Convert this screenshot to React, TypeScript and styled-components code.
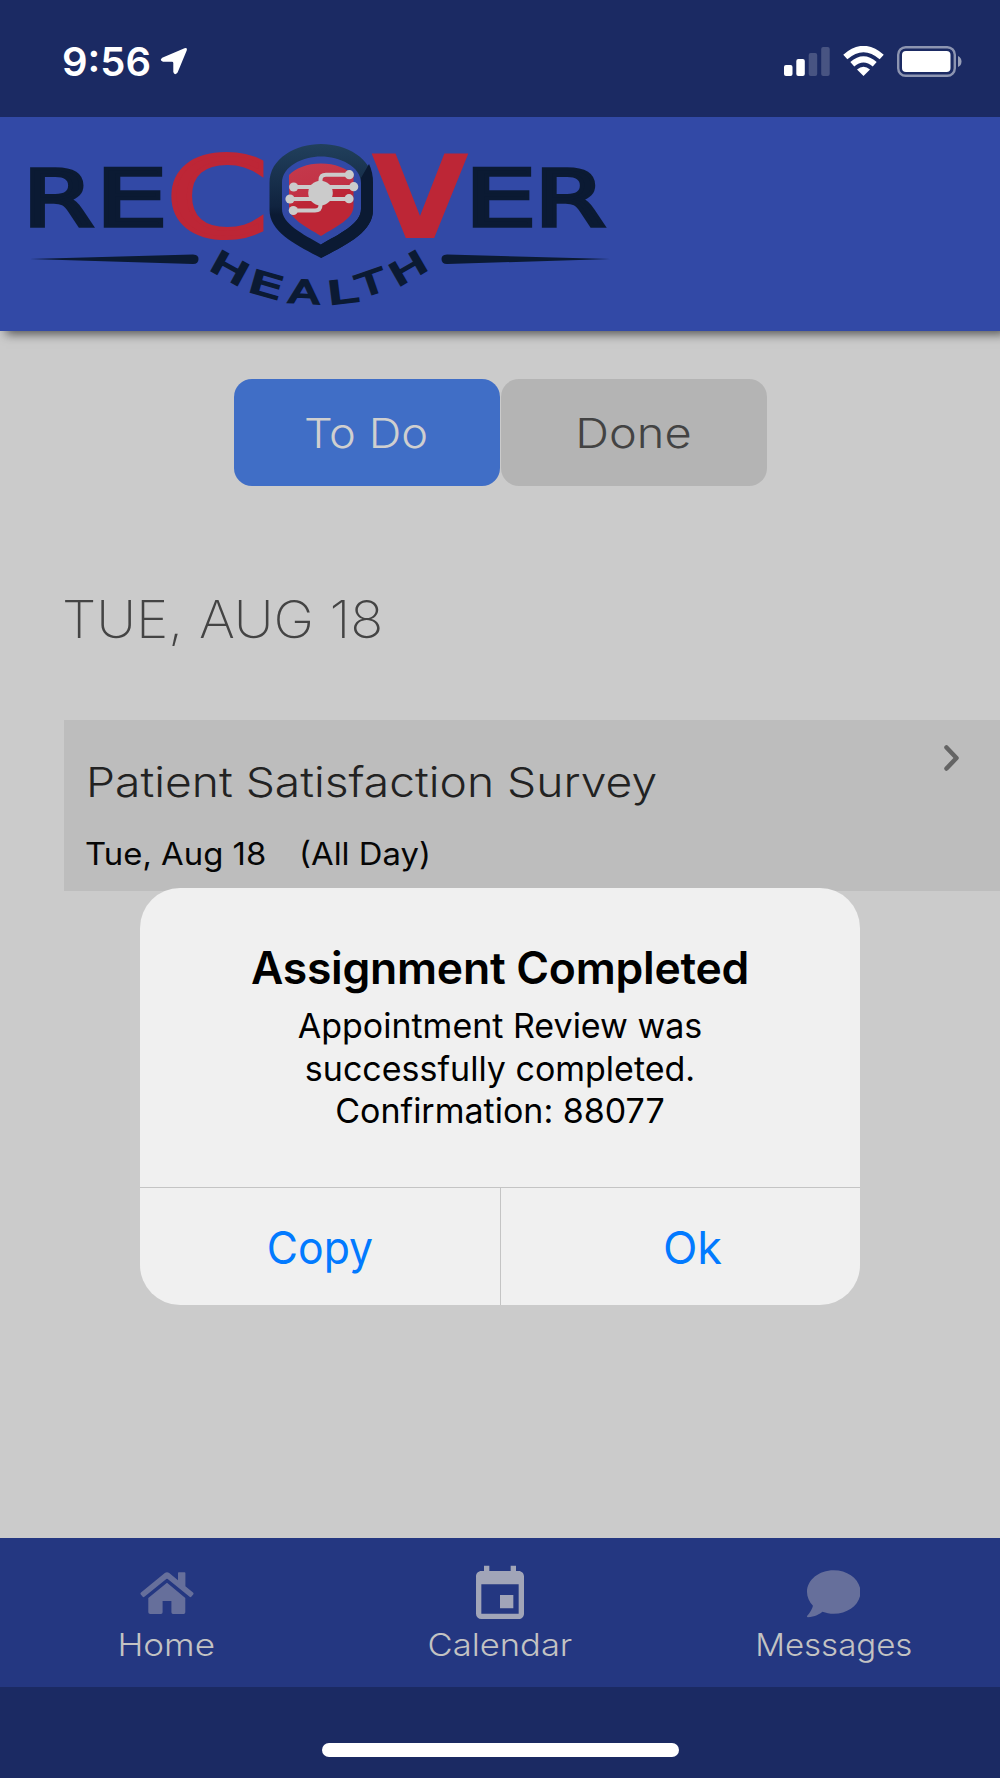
import styled, { createGlobalStyle } from "styled-components";
import { FaComment } from "react-icons/fa";
import { MdEvent } from "react-icons/md";

const GlobalStyle = createGlobalStyle`
    * {
        box-sizing: border-box;
    }
    body {
        margin: 0;
        background: #cbcbcb;
    }
    h1, h2, h3, p {
        margin: 0;
    }
    button {
        border: 0;
        padding: 0;
        background: none;
        font: inherit;
    }
`

const Screen = styled.div`
    position: relative;
    width: 1000px;
    height: 1778px;
    overflow: hidden;
    display: flex;
    flex-direction: column;
    background: #cbcbcb;
    font-family: "Inter", "Liberation Sans", sans-serif;
`

// widens the type face a little
const Wide = styled.span<{ $scale: number; $origin?: string }>`
    display: inline-block;
    transform: scaleX(${({ $scale }) => $scale});
    transform-origin: ${({ $origin }) => $origin || "center"};
`

const StatusBar = styled.div`
    position: relative;
    z-index: 1;
    height: 117px;
    flex: none;
    display: flex;
    justify-content: space-between;
    padding: 38px 37px 0 62px;
    background: #1b2a63;
    color: #fff;
`

const Clock = styled.div`
    display: flex;
    gap: 9px;
    font-size: 40px;
    font-weight: 600;
    line-height: 48px;
    svg {
        margin-top: 9px;
    }
`

const StatusIcons = styled.div`
    display: flex;
    gap: 13px;
    padding-top: 8px;
`

const Header = styled.header`
    position: relative;
    height: 214px;
    flex: none;
    background: #3249a6;
    box-shadow: 6px 3px 10px rgba(0, 0, 0, 0.6);
`

const Content = styled.main`
    flex: 1;
    display: flex;
    flex-direction: column;
`

const Tabs = styled.div`
    display: flex;
    justify-content: center;
    gap: 1px;
    margin: 48px 0 0 0;
`

const Tab = styled.button<{ $active?: boolean }>`
    width: 266px;
    height: 107px;
    border-radius: 18px;
    background: ${({ $active }) => ($active ? "#406ec6" : "#b4b4b4")};
    color: ${({ $active }) => ($active ? "#cfcfcf" : "#434343")};
    font-size: 41.5px;
    font-weight: 300;
    padding: 0 1px 0 0;
`

const DateHeading = styled.h2`
    margin: 100px 0 0 62px;
    height: 134px;
    font-size: 51.5px;
    line-height: 66px;
    font-weight: 250;
    color: #444;
`

const Card = styled.div`
    height: 171px;
    margin-left: 64px;
    padding: 37px 40px 0 22px;
    display: flex;
    justify-content: space-between;
    background: #bdbdbd;
    svg {
        margin-top: -13px;
    }
`

const CardTitle = styled.h3`
    font-size: 41.5px;
    line-height: 50px;
    font-weight: 300;
    color: #222;
`

const CardTime = styled.p`
    display: flex;
    gap: 43px;
    margin: 28px 0 0 -1px;
    font-size: 31px;
    line-height: 38px;
    font-weight: 400;
    color: #060606;
`

const NavBar = styled.nav`
    height: 149px;
    flex: none;
    display: flex;
    background: #243781;
`

const NavItem = styled.div<{ $active?: boolean }>`
    flex: 1;
    display: flex;
    flex-direction: column;
    align-items: center;
    padding-top: 22px;
    font-size: 31px;
    font-weight: 300;
    line-height: 36px;
    color: #c3c3c3;
    svg {
        color: ${({ $active }) => ($active ? "#a1a5b8" : "#666f9b")};
        margin-top: ${({ $active }) => ($active ? "2px" : "0")};
    }
`

const NavIcon = styled.div`
    height: 67px;
    display: flex;
    align-items: center;
`

const HomeArea = styled.div`
    height: 91px;
    flex: none;
    display: flex;
    justify-content: center;
    padding-top: 56px;
    background: #1b2a63;
`

const HomeIndicator = styled.div`
    width: 357px;
    height: 14px;
    border-radius: 7px;
    background: #fff;
`

const Alert = styled.div`
    position: absolute;
    top: 888px;
    left: 140px;
    width: 720px;
    height: 417px;
    border-radius: 40px;
    overflow: hidden;
    display: flex;
    flex-direction: column;
    background: #f0f0f0;
    text-align: center;
    color: #000;
`

const AlertBody = styled.div`
    flex: 1;
    padding-top: 53px;
`

const AlertTitle = styled.h1`
    font-size: 44.5px;
    line-height: 54px;
    font-weight: 600;
    letter-spacing: -0.25px;
`

const AlertMessage = styled.p`
    margin-top: 10px;
    font-size: 34px;
    line-height: 42.7px;
    white-space: pre-line;
`

const AlertActions = styled.div`
    display: grid;
    grid-template-columns: 1fr 1fr;
    height: 118px;
    border-top: 1px solid #c4c4c4;
`

const AlertButton = styled.button<{ $inset?: number }>`
    color: #027aff;
    font-size: 45px;
    padding: 2px 0 0 ${({ $inset }) => $inset || 0}px;
    & + & {
        border-left: 1px solid #c4c4c4;
    }
`

const NAVY = "#0b1a33";
const RED = "#bd2636";

// x is the left edge, y the baseline
const wordmark = [
    { char: "R", x: 22.3, y: 226, width: 72, size: 79, weight: 400, stroke: 3.5, fill: NAVY },
    { char: "E", x: 95, y: 226, width: 73, size: 79, weight: 400, stroke: 3.5, fill: NAVY },
    { char: "C", x: 165.7, y: 236, width: 103, size: 111, weight: 400, stroke: 4, fill: RED },
    { char: "V", x: 371, y: 237.5, width: 98, size: 115, weight: 700, stroke: 0, fill: RED },
    { char: "E", x: 464, y: 226, width: 73, size: 79, weight: 400, stroke: 3.5, fill: NAVY },
    { char: "R", x: 534, y: 226, width: 72, size: 79, weight: 400, stroke: 3.5, fill: NAVY },
];

// letters of the curved line, x and y are their centres
const curved = [
    { char: "H", x: 230, y: 268, width: 38, angle: 29 },
    { char: "E", x: 266, y: 284.5, width: 34, angle: 16 },
    { char: "A", x: 304, y: 291.5, width: 31, angle: 3 },
    { char: "L", x: 342, y: 291.5, width: 30, angle: -7 },
    { char: "T", x: 371, y: 282.5, width: 28, angle: -19 },
    { char: "H", x: 408, y: 268, width: 38, angle: -30 },
];

const Logo = () => (
    <svg width="620" height="214" viewBox="0 117 620 214" fontFamily="DejaVu Sans, sans-serif">
        <defs>
            <linearGradient id="shield" x1="0" y1="0" x2="0" y2="1">
                <stop offset="0" stopColor="#21405c" />
                <stop offset="0.55" stopColor="#10233f" />
                <stop offset="0.62" stopColor={NAVY} />
            </linearGradient>
            <linearGradient id="core" x1="0" y1="0" x2="0.3" y2="1">
                <stop offset="0" stopColor="#c43a4c" />
                <stop offset="0.5" stopColor="#c23145" />
                <stop offset="0.55" stopColor={RED} />
            </linearGradient>
        </defs>
        {wordmark.map(({ char, x, y, width, size, weight, stroke, fill }) => (
            <text
                key={`${char}-${x}`}
                x={x}
                y={y}
                fontSize={size}
                fontWeight={weight}
                fill={fill}
                stroke={fill}
                strokeWidth={stroke}
                textLength={width}
                lengthAdjust="spacingAndGlyphs"
            >
                {char}
            </text>
        ))}
        {curved.map(({ char, x, y, width, angle }) => (
            <text
                key={`${char}-${x}`}
                transform={`translate(${x} ${y}) rotate(${angle})`}
                x={-width / 2}
                y={11.5}
                fontSize={31.5}
                fill={NAVY}
                stroke={NAVY}
                strokeWidth={2}
                textLength={width}
                lengthAdjust="spacingAndGlyphs"
            >
                {char}
            </text>
        ))}
        <path d="M30 259 L193 254.5 Q198.500 254.500 198.500 259 Q198.500 264 193 264 Z" fill={NAVY} />
        <path d="M610 259 L447 254.500 Q441.500 254.500 441.500 259 Q441.500 264 447 264 Z" fill={NAVY} />
        <path
            fillRule="evenodd"
            fill="url(#shield)"
            d="M321 144 C296 144 269.500 158 269.500 183 V210 C269.500 232 296 245 321 258 C346 245 373 232 373 210 V183 C373 158 346 144 321 144 Z
               M321 156.500 C303 156.500 282 166 282 183 V209 C282 224 303 234 321 244.500 C339 234 361 224 361 209 V183 C361 166 339 156.500 321 156.500 Z"
        />
        <path d="M369 164 L361 178 V209 C361 224 339 234 321 244.500 V258 C346 245 373 232 373 210 V183 Q373 172 369 164 Z" fill={NAVY} />
        <path d="M321 163.500 C307 163.500 296 168 289 175 V206 C289 219 305 226 321 236 C337 226 353.500 219 353.500 206 V175 C346 168 335 163.500 321 163.500 Z" fill="url(#core)" />
        <g stroke="#cbcbcb" strokeWidth="4" fill="none">
            <path d="M294 187 H354 M290 199 H349 M293 210.500 H315 Q320.500 210.500 320.500 205 V180 Q320.500 174.700 326 174.700 H349" />
        </g>
        <g fill="#cbcbcb">
            <circle cx="320.500" cy="193" r="12.300" />
            <circle cx="293.700" cy="187" r="4.600" />
            <circle cx="290" cy="199" r="4.600" />
            <circle cx="293.300" cy="210.500" r="4.600" />
            <circle cx="349.300" cy="174.700" r="4.600" />
            <circle cx="353.700" cy="186.700" r="4.600" />
            <circle cx="349" cy="198.700" r="4.600" />
        </g>
    </svg>
)

const LocationArrow = () => (
    <svg width="28" height="28" viewBox="0 0 28 28" fill="#fff">
        <path d="M24.500 1.200 Q27.600 0.300 26.700 3.500 L17.600 25.500 Q14.500 29 13.300 25 V16 Q13.300 14.700 12 14.700 H3 Q-1 13.500 2.200 10.700 Z" />
    </svg>
)

const Signal = () => (
    <svg width="46" height="30" viewBox="0 0 46 30" fill="#fff">
        <rect x="0" y="19" width="8.500" height="11" rx="2" />
        <rect x="12.300" y="13" width="8.500" height="17" rx="2" />
        <rect x="24.700" y="7" width="8.500" height="23" rx="2" opacity="0.2" />
        <rect x="37.200" y="1" width="8.500" height="29" rx="2" opacity="0.2" />
    </svg>
)

const Wifi = () => (
    <svg width="41" height="30" viewBox="0 0 41 30" fill="none" stroke="#fff">
        <path d="M2.300 11 Q20.500 -5 38.700 11" strokeWidth="6.200" />
        <path d="M9.300 18.300 Q20.500 8.500 31.700 18.300" strokeWidth="6" />
        <path d="M20.500 30 L14 23.600 Q20.500 18 27 23.600 Z" fill="#fff" stroke="none" />
    </svg>
)

const Battery = () => (
    <svg width="66" height="31" viewBox="0 0 66 31" fill="#fff">
        <rect x="1.200" y="1.200" width="56.600" height="28.600" rx="7.500" fill="none" stroke="#fff" strokeWidth="2.400" opacity="0.5" />
        <rect x="5" y="5" width="48.500" height="21" rx="4" />
        <path d="M61 10 Q64.500 11.500 64.500 15.500 Q64.500 19.500 61 21 Z" opacity="0.55" />
    </svg>
)

const HomeIcon = () => (
    <svg width="54" height="43" viewBox="0 0 54 43" fill="currentColor">
        <path d="M24.800 1 Q27 -0.500 29.200 1 L38 8.200 V1 Q38 0.200 38.800 0.200 H44.600 Q45.400 0.200 45.400 1 V14.300 L53 20.500 Q54 21.500 53.200 22.500 L51.500 24.600 Q50.600 25.600 49.600 24.800 L27.700 6.900 Q27 6.400 26.300 6.900 L4.400 24.800 Q3.400 25.600 2.500 24.600 L0.800 22.500 Q0 21.500 1 20.500 Z" />
        <path d="M27 10.800 L45.300 26 V40.300 Q45.300 41.900 43.700 41.900 H33 Q31.400 41.900 31.400 40.300 V29 H22.600 V40.300 Q22.600 41.900 21 41.900 H10.300 Q8.300 41.900 8.300 40.300 V26 Z" />
    </svg>
)

const App = () => {
    return (
        <>
            <GlobalStyle />
            <Screen>
                <StatusBar>
                    <Clock>
                        9:56
                        <LocationArrow />
                    </Clock>
                    <StatusIcons>
                        <Signal />
                        <Wifi />
                        <Battery />
                    </StatusIcons>
                </StatusBar>
                <Header>
                    <Logo />
                </Header>
                <Content>
                    <Tabs>
                        <Tab $active><Wide $scale={1.09}>To Do</Wide></Tab>
                        <Tab><Wide $scale={1.13}>Done</Wide></Tab>
                    </Tabs>
                    <DateHeading><Wide $scale={1.063} $origin="left">TUE, AUG 18</Wide></DateHeading>
                    <Card>
                        <div>
                            <CardTitle><Wide $scale={1.113} $origin="left">Patient Satisfaction Survey</Wide></CardTitle>
                            <CardTime>
                                <Wide $scale={1.06} $origin="left">Tue, Aug 18</Wide>
                                <Wide $scale={1.06} $origin="left">(All Day)</Wide>
                            </CardTime>
                        </div>
                        <svg width="18" height="28" viewBox="0 0 18 28" fill="none" stroke="#646464" strokeWidth="4.500" strokeLinecap="round" strokeLinejoin="round">
                            <path d="M4.500 3.500 L14.500 14 L4.500 24.500" />
                        </svg>
                    </Card>
                </Content>
                <NavBar>
                    <NavItem>
                        <NavIcon><HomeIcon /></NavIcon>
                        <Wide $scale={1.13}>Home</Wide>
                    </NavItem>
                    <NavItem $active>
                        <NavIcon><MdEvent size={64} /></NavIcon>
                        <Wide $scale={1.114}>Calendar</Wide>
                    </NavItem>
                    <NavItem>
                        <NavIcon><FaComment size={53.5} /></NavIcon>
                        <Wide $scale={1.065}>Messages</Wide>
                    </NavItem>
                </NavBar>
                <HomeArea>
                    <HomeIndicator />
                </HomeArea>
                <Alert>
                    <AlertBody>
                        <AlertTitle>Assignment Completed</AlertTitle>
                        <AlertMessage>{"Appointment Review was\nsuccessfully completed.\nConfirmation: 88077"}</AlertMessage>
                    </AlertBody>
                    <AlertActions>
                        <AlertButton><Wide $scale={0.95}>Copy</Wide></AlertButton>
                        <AlertButton $inset={24}>Ok</AlertButton>
                    </AlertActions>
                </Alert>
            </Screen>
        </>
    )
}

export default App;
